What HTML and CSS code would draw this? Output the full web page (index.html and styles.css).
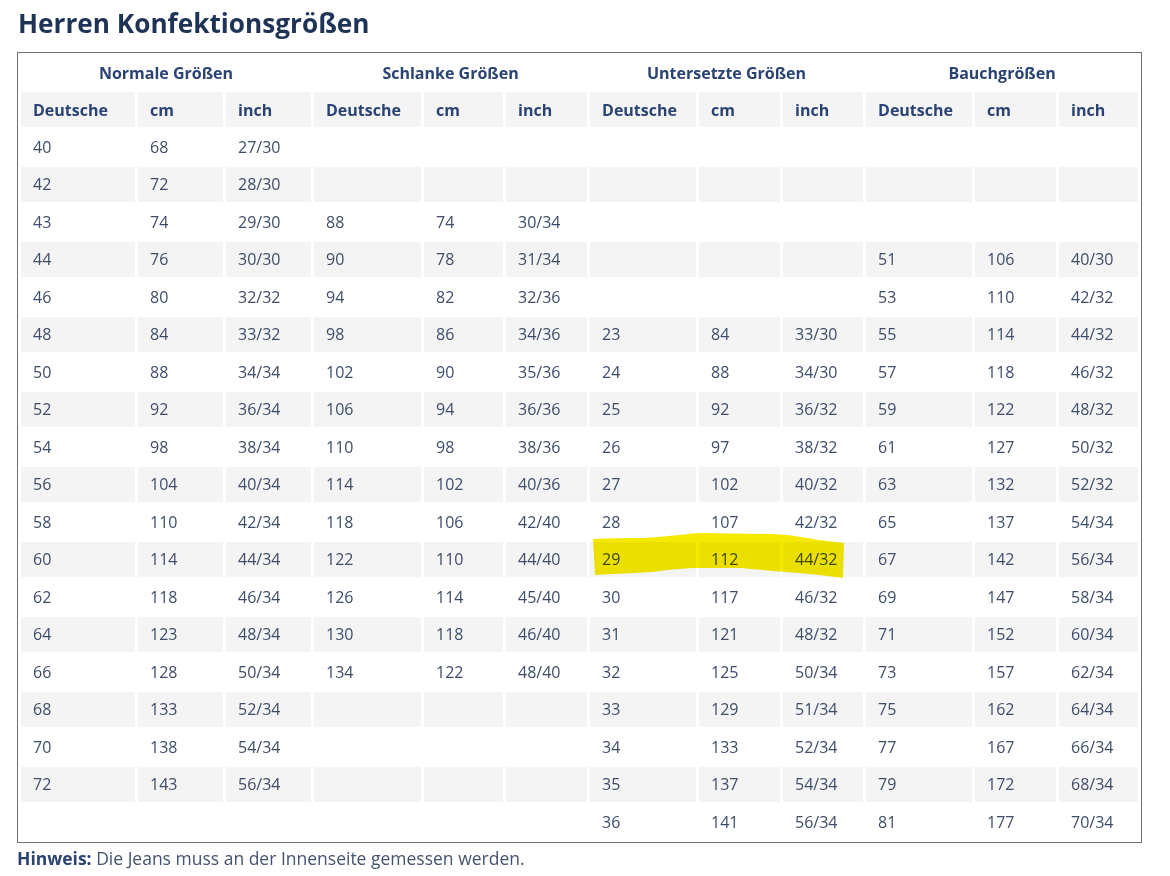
FILE: index.html
```html
<!DOCTYPE html>
<html lang="de">
<head>
<meta charset="utf-8">
<title>Herren Konfektionsgrößen</title>
<link rel="stylesheet" href="styles.css">
</head>
<body>
<div class="page">
  <h1 class="title">Herren Konfektionsgrößen</h1>
  <div class="table-wrap">
    <table class="sizes">
      <colgroup>
        <col class="c-de1"><col class="c-cm1"><col class="c-in1">
        <col class="c-de2"><col class="c-cm2"><col class="c-in2">
        <col class="c-de3"><col class="c-cm3"><col class="c-in3">
        <col class="c-de4"><col class="c-cm4"><col class="c-in4">
      </colgroup>
      <thead>
        <tr class="group-row">
          <th colspan="3">Normale Größen</th>
          <th colspan="3">Schlanke Größen</th>
          <th colspan="3">Untersetzte Größen</th>
          <th colspan="3">Bauchgrößen</th>
        </tr>
        <tr class="sub-row">
          <th>Deutsche</th><th>cm</th><th>inch</th>
          <th>Deutsche</th><th>cm</th><th>inch</th>
          <th>Deutsche</th><th>cm</th><th>inch</th>
          <th>Deutsche</th><th>cm</th><th>inch</th>
        </tr>
      </thead>
      <tbody>
        <tr><td>40</td><td>68</td><td>27/30</td><td></td><td></td><td></td><td></td><td></td><td></td><td></td><td></td><td></td></tr>
        <tr><td>42</td><td>72</td><td>28/30</td><td></td><td></td><td></td><td></td><td></td><td></td><td></td><td></td><td></td></tr>
        <tr><td>43</td><td>74</td><td>29/30</td><td>88</td><td>74</td><td>30/34</td><td></td><td></td><td></td><td></td><td></td><td></td></tr>
        <tr><td>44</td><td>76</td><td>30/30</td><td>90</td><td>78</td><td>31/34</td><td></td><td></td><td></td><td>51</td><td>106</td><td>40/30</td></tr>
        <tr><td>46</td><td>80</td><td>32/32</td><td>94</td><td>82</td><td>32/36</td><td></td><td></td><td></td><td>53</td><td>110</td><td>42/32</td></tr>
        <tr><td>48</td><td>84</td><td>33/32</td><td>98</td><td>86</td><td>34/36</td><td>23</td><td>84</td><td>33/30</td><td>55</td><td>114</td><td>44/32</td></tr>
        <tr><td>50</td><td>88</td><td>34/34</td><td>102</td><td>90</td><td>35/36</td><td>24</td><td>88</td><td>34/30</td><td>57</td><td>118</td><td>46/32</td></tr>
        <tr><td>52</td><td>92</td><td>36/34</td><td>106</td><td>94</td><td>36/36</td><td>25</td><td>92</td><td>36/32</td><td>59</td><td>122</td><td>48/32</td></tr>
        <tr><td>54</td><td>98</td><td>38/34</td><td>110</td><td>98</td><td>38/36</td><td>26</td><td>97</td><td>38/32</td><td>61</td><td>127</td><td>50/32</td></tr>
        <tr><td>56</td><td>104</td><td>40/34</td><td>114</td><td>102</td><td>40/36</td><td>27</td><td>102</td><td>40/32</td><td>63</td><td>132</td><td>52/32</td></tr>
        <tr><td>58</td><td>110</td><td>42/34</td><td>118</td><td>106</td><td>42/40</td><td>28</td><td>107</td><td>42/32</td><td>65</td><td>137</td><td>54/34</td></tr>
        <tr><td>60</td><td>114</td><td>44/34</td><td>122</td><td>110</td><td>44/40</td><td>29</td><td>112</td><td>44/32</td><td>67</td><td>142</td><td>56/34</td></tr>
        <tr><td>62</td><td>118</td><td>46/34</td><td>126</td><td>114</td><td>45/40</td><td>30</td><td>117</td><td>46/32</td><td>69</td><td>147</td><td>58/34</td></tr>
        <tr><td>64</td><td>123</td><td>48/34</td><td>130</td><td>118</td><td>46/40</td><td>31</td><td>121</td><td>48/32</td><td>71</td><td>152</td><td>60/34</td></tr>
        <tr><td>66</td><td>128</td><td>50/34</td><td>134</td><td>122</td><td>48/40</td><td>32</td><td>125</td><td>50/34</td><td>73</td><td>157</td><td>62/34</td></tr>
        <tr><td>68</td><td>133</td><td>52/34</td><td></td><td></td><td></td><td>33</td><td>129</td><td>51/34</td><td>75</td><td>162</td><td>64/34</td></tr>
        <tr><td>70</td><td>138</td><td>54/34</td><td></td><td></td><td></td><td>34</td><td>133</td><td>52/34</td><td>77</td><td>167</td><td>66/34</td></tr>
        <tr><td>72</td><td>143</td><td>56/34</td><td></td><td></td><td></td><td>35</td><td>137</td><td>54/34</td><td>79</td><td>172</td><td>68/34</td></tr>
        <tr><td></td><td></td><td></td><td></td><td></td><td></td><td>36</td><td>141</td><td>56/34</td><td>81</td><td>177</td><td>70/34</td></tr>
      </tbody>
    </table>
    <svg class="marker" width="252" height="46" viewBox="0 0 252 46" aria-hidden="true">
      <path d="M0,6 C20,5 40,5 52,5 C80,3 100,0 109,0 L179,1 C200,2 215,5 225,7 L251,10 L250,45 C235,43 222,41 192,39 C170,37 150,35 142,35 L109,35 C90,35 75,37 59,39 L2,42 Z" fill="#f6e900"/>
    </svg>
  </div>
  <p class="note"><strong>Hinweis:</strong> Die Jeans muss an der Innenseite gemessen werden.</p>
</div>
</body>
</html>
```

FILE: styles.css
```css
html, body {
  margin: 0;
  padding: 0;
  background: #ffffff;
}

body {
  font-family: "Open Sans", "Liberation Sans", Arial, sans-serif;
  color: #3e4d69;
}

.page {
  padding: 6px 0 0 17px;
}

.title {
  margin: 0 0 12px 0;
  font-size: 26.2px;
  line-height: 34px;
  font-weight: 700;
  color: #1e3356;
  padding-left: 1px;
}

.table-wrap {
  position: relative;
  width: 1125px;
}

.sizes {
  table-layout: fixed;
  width: 1125px;
  border: 1px solid #6f6f6f;
  border-collapse: separate;
  border-spacing: 3px 2px;
  font-size: 16px;
}

.c-de1 { width: 114px; }
.c-cm1 { width: 85px; }
.c-in1 { width: 85px; }
.c-de2 { width: 107px; }
.c-cm2 { width: 79px; }
.c-in2 { width: 81px; }
.c-de3 { width: 106px; }
.c-cm3 { width: 81px; }
.c-in3 { width: 80px; }
.c-de4 { width: 106px; }
.c-cm4 { width: 81px; }
.c-in4 { width: 79px; }

.sizes th,
.sizes td {
  padding: 0 0 0 12px;
  height: 35.5px;
  box-sizing: border-box;
  text-align: left;
  vertical-align: middle;
  white-space: nowrap;
  line-height: 20px;
}

.group-row th {
  text-align: center;
  padding: 0;
  height: 35px;
  color: #2b4373;
  font-weight: 700;
}

.sub-row th {
  background: #f4f4f4;
  color: #2b4373;
  font-weight: 700;
  height: 35px;
}

.sizes td {
  font-weight: 400;
  color: #3e4d69;
}

.sizes tbody tr:nth-child(even) td {
  background: #f4f4f4;
}

.marker {
  position: absolute;
  left: 576px;
  top: 481px;
  mix-blend-mode: multiply;
  pointer-events: none;
}

.note {
  margin: 2px 0 0 0;
  font-size: 17.5px;
  line-height: 26px;
  color: #44536e;
}

.note strong {
  color: #2b4373;
  font-weight: 700;
}
```
